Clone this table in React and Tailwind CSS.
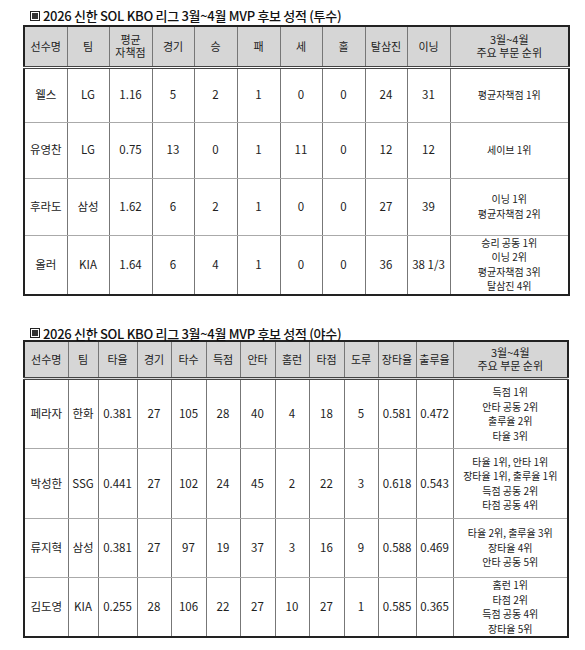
const pitchers = {
  cols: [43, 42, 43, 42, 43, 43, 42, 43, 42, 43, 119],
  head: ['선수명', '팀', '평균\n자책점', '경기', '승', '패', '세', '홀', '탈삼진', '이닝', '3월~4월\n주요 부문 순위'],
  headH: 41,
  rows: [
    { h: 55, cells: ['웰스', 'LG', '1.16', '5', '2', '1', '0', '0', '24', '31'], rank: ['평균자책점 1위'] },
    { h: 56, cells: ['유영찬', 'LG', '0.75', '13', '0', '1', '11', '0', '12', '12'], rank: ['세이브 1위'] },
    { h: 57, cells: ['후라도', '삼성', '1.62', '6', '2', '1', '0', '0', '27', '39'], rank: ['이닝 1위', '평균자책점 2위'] },
    { h: 55, cells: ['올러', 'KIA', '1.64', '6', '4', '1', '0', '0', '36', '38 1/3'], rank: ['승리 공동 1위', '이닝 2위', '평균자책점 3위', '탈삼진 4위'] },
  ],
};

const hitters = {
  cols: [44, 30, 39, 34, 35, 34, 35, 34, 35, 34, 38, 37, 115],
  head: ['선수명', '팀', '타율', '경기', '타수', '득점', '안타', '홈런', '타점', '도루', '장타율', '출루율', '3월~4월\n주요 부문 순위'],
  headH: 38,
  rows: [
    { h: 70, cells: ['페라자', '한화', '0.381', '27', '105', '28', '40', '4', '18', '5', '0.581', '0.472'], rank: ['득점 1위', '안타 공동 2위', '출루율 2위', '타율 3위'] },
    { h: 70, cells: ['박성한', 'SSG', '0.441', '27', '102', '24', '45', '2', '22', '3', '0.618', '0.543'], rank: ['타율 1위, 안타 1위', '장타율 1위, 출루율 1위', '득점 공동 2위', '타점 공동 4위'] },
    { h: 59, cells: ['류지혁', '삼성', '0.381', '27', '97', '19', '37', '3', '16', '9', '0.588', '0.469'], rank: ['타율 2위, 출루율 3위', '장타율 4위', '안타 공동 5위'] },
    { h: 59, cells: ['김도영', 'KIA', '0.255', '28', '106', '22', '27', '10', '27', '1', '0.585', '0.365'], rank: ['홈런 1위', '타점 2위', '득점 공동 4위', '장타율 5위'] },
  ],
};

function Title({ text }) {
  return (
    <div className="flex items-center pl-[7px] text-[13px] text-[#111] font-medium tracking-[-0.3px]">
      <span className="mr-[3px] inline-flex h-[10px] w-[10px] items-center justify-center border border-[#222]">
        <span className="h-[6px] w-[6px] bg-[#333]"></span>
      </span>
      {text}
    </div>
  );
}

function StatTable({ data }) {
  const total = data.cols.reduce((a, b) => a + b, 0);
  return (
    <table className="table-fixed border-collapse border-2 border-[#222] text-[11px] text-[#222]" style={{ width: total }}>
      <colgroup>
        {data.cols.map((w, i) => (
          <col key={i} style={{ width: w }} />
        ))}
      </colgroup>
      <thead>
        <tr className="bg-[#d6d6d6]" style={{ height: data.headH }}>
          {data.head.map((t, i) => (
            <th key={i} className="whitespace-pre-line border-x border-b-[3px] border-x-[#777] border-b-[#444] border-double p-0 text-center font-normal leading-[13px]">
              {t}
            </th>
          ))}
        </tr>
      </thead>
      <tbody>
        {data.rows.map((r, ri) => (
          <tr key={ri} style={{ height: r.h }}>
            {r.cells.map((c, ci) => (
              <td key={ci} className="border border-x-[#777] border-y-[#aaa] p-0 text-center text-[11.5px]">
                {c}
              </td>
            ))}
            <td className="border border-x-[#777] border-y-[#aaa] p-0 text-center text-[10px] leading-[14.5px]">
              {r.rank.map((l, li) => (
                <div key={li}>{l}</div>
              ))}
            </td>
          </tr>
        ))}
      </tbody>
    </table>
  );
}

export default function App() {
  return (
    <div className="h-[650px] w-[585px] bg-white pl-[23px] pt-[6px]" style={{ fontFamily: '"Noto Sans CJK KR", "Noto Sans", sans-serif' }}>
      <div className="h-[19px]">
        <Title text="2026 신한 SOL KBO 리그 3월~4월 MVP 후보 성적 (투수)" />
      </div>
      <StatTable data={pitchers} />
      <div className="mt-[28px] h-[16px]">
        <Title text="2026 신한 SOL KBO 리그 3월~4월 MVP 후보 성적 (야수)" />
      </div>
      <StatTable data={hitters} />
    </div>
  );
}
